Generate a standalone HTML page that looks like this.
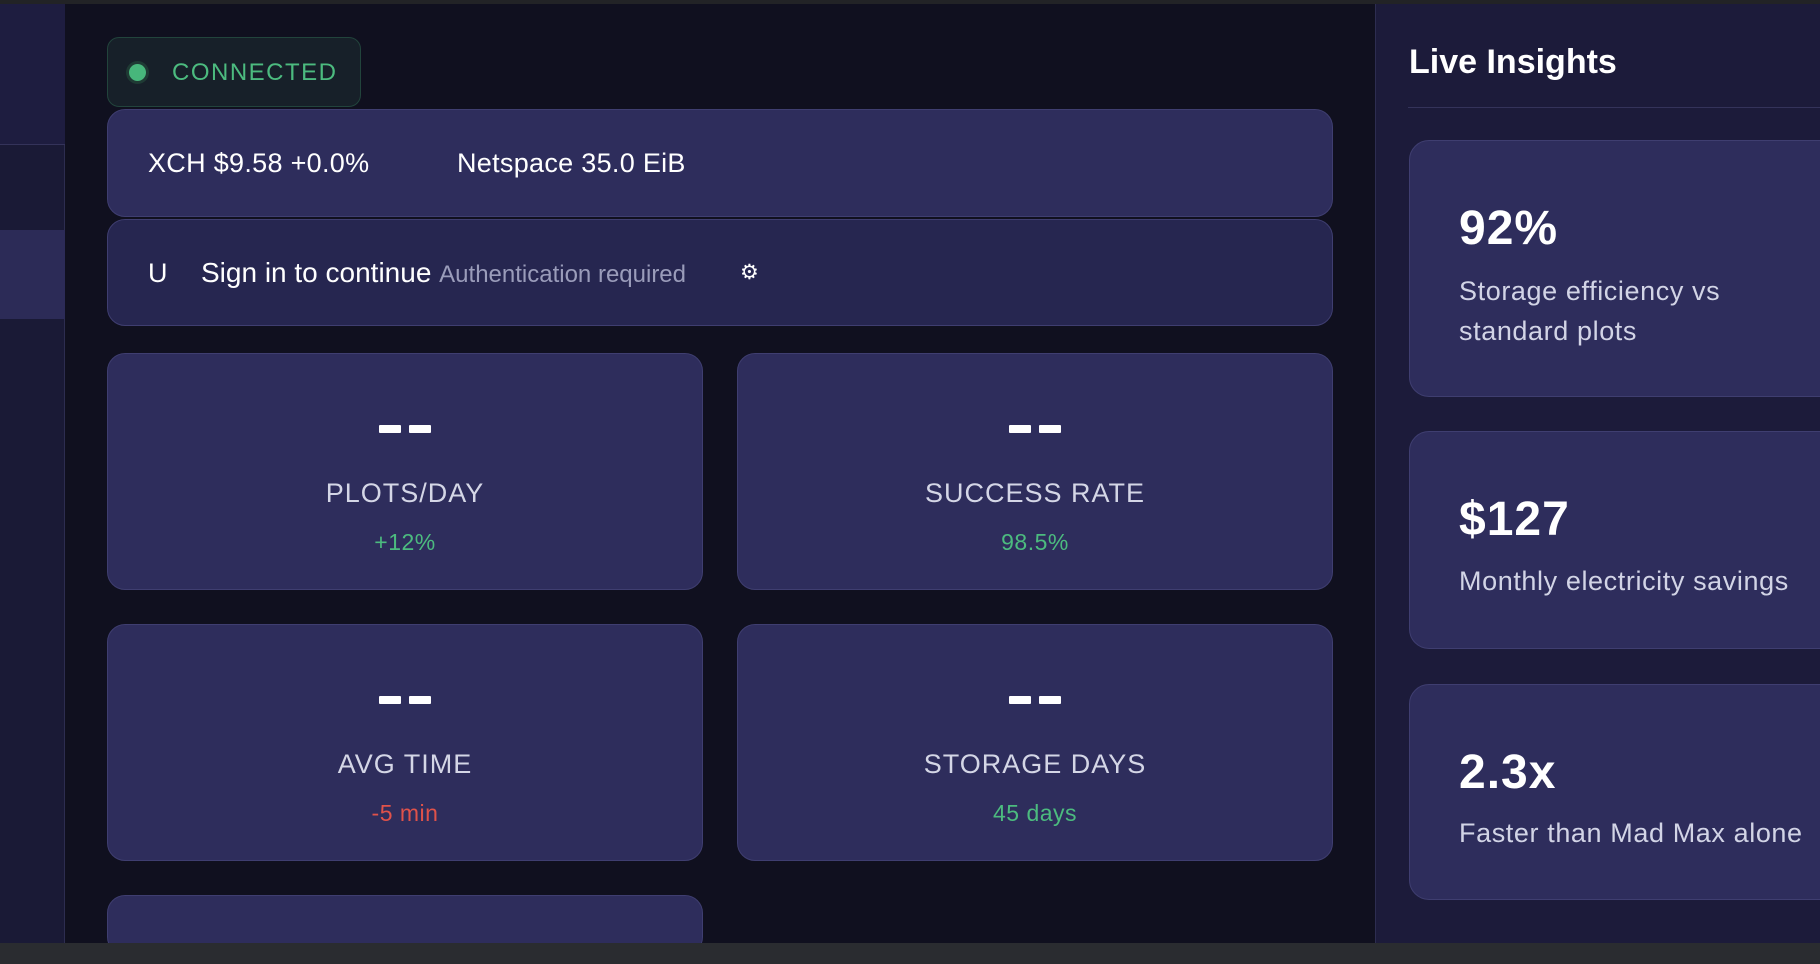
<!DOCTYPE html>
<html><head><style>
*{box-sizing:border-box;margin:0;padding:0}
html,body{width:1820px;height:964px;overflow:hidden}
body{background:#10101f;font-family:"Liberation Sans",sans-serif;position:relative;color:#fff}
.abs{position:absolute}
.card{position:absolute;background:#2e2d5c;border:1px solid #3f3e70;border-radius:18px}
.stat{text-align:center}
.dash{position:absolute;left:50%;top:71px;width:52px;margin-left:-26px;height:8px}
.dash:before,.dash:after{content:"";position:absolute;top:0;width:22px;height:8px;background:#fff;border-radius:1px}
.dash:before{left:0}.dash:after{right:0}
.lbl{position:absolute;left:0;right:0;top:124px;font-size:27px;color:#d4d6e6;letter-spacing:1px}
.sub{position:absolute;left:0;right:0;top:175px;font-size:23px;color:#4cbb7f;letter-spacing:.5px}
.ins{position:absolute;left:1409px;width:460px;background:#2e2d5c;border:1px solid #3f3e70;border-radius:20px}
.ins b{position:absolute;left:49px;font-size:48px;font-weight:bold;letter-spacing:1px}
.ins span{position:absolute;left:49px;font-size:27px;color:#d2d4e6;line-height:40px;letter-spacing:.6px}
</style></head><body>
<div class="abs" style="left:0;top:0;width:1820px;height:4px;background:#222326"></div>
<div class="abs" style="left:0;top:4px;width:65px;height:940px;background:#1a1a36;border-right:1px solid #2d2d50"></div>
<div class="abs" style="left:0;top:4px;width:65px;height:141px;background:#1e1d40;border-bottom:1px solid #34335a"></div>
<div class="abs" style="left:0;top:230px;width:65px;height:89px;background:#2c2b57"></div>
<div class="abs" style="left:1375px;top:4px;width:445px;height:940px;background:#1c1b3a;border-left:1px solid #2d2d50"></div>

<div class="abs" style="left:107px;top:37px;width:254px;height:70px;background:#172029;border:1px solid #22443c;border-radius:12px">
<div class="abs" style="left:21px;top:26px;width:17px;height:17px;border-radius:50%;background:#47b67b;box-shadow:0 0 0 3px #1f3a34"></div>
<div class="abs" style="left:64px;top:21px;font-size:24px;color:#4cbb7f;letter-spacing:1.5px">CONNECTED</div></div>

<div class="card" style="left:107px;top:109px;width:1226px;height:108px;background:#2e2d5c">
<div class="abs" style="left:40px;top:38px;font-size:27px;letter-spacing:.3px">XCH $9.58 +0.0%</div>
<div class="abs" style="left:349px;top:38px;font-size:27px;letter-spacing:.3px">Netspace 35.0 EiB</div></div>
<div class="card" style="left:107px;top:219px;width:1226px;height:107px;background:#262650">
<div class="abs" style="left:40px;top:38px;font-size:27px">U</div>
<div class="abs" style="left:93px;top:37px;font-size:28px">Sign in to continue <span style="font-size:24px;color:#9a9cba">Authentication required</span></div>
<div class="abs" style="left:632px;top:40px;font-size:21px">⚙</div></div>

<div class="card stat" style="left:107px;top:353px;width:596px;height:237px"><div class="dash"></div><div class="lbl">PLOTS/DAY</div><div class="sub">+12%</div></div>
<div class="card stat" style="left:737px;top:353px;width:596px;height:237px"><div class="dash"></div><div class="lbl">SUCCESS RATE</div><div class="sub">98.5%</div></div>
<div class="card stat" style="left:107px;top:624px;width:596px;height:237px"><div class="dash"></div><div class="lbl">AVG TIME</div><div class="sub" style="color:#e0524a">-5 min</div></div>
<div class="card stat" style="left:737px;top:624px;width:596px;height:237px"><div class="dash"></div><div class="lbl">STORAGE DAYS</div><div class="sub">45 days</div></div>
<div class="card" style="left:107px;top:895px;width:596px;height:60px"></div>

<div class="abs" style="left:1409px;top:43px;font-size:34px;font-weight:bold">Live Insights</div>
<div class="abs" style="left:1408px;top:107px;width:412px;height:1px;background:#34335a"></div>
<div class="ins" style="top:140px;height:257px"><b style="top:60px">92%</b><span style="top:130px">Storage efficiency vs<br>standard plots</span></div>
<div class="ins" style="top:431px;height:218px"><b style="top:60px">$127</b><span style="top:129px">Monthly electricity savings</span></div>
<div class="ins" style="top:684px;height:216px"><b style="top:60px">2.3x</b><span style="top:128px">Faster than Mad Max alone</span></div>
<div class="abs" style="left:0;top:943px;width:1820px;height:21px;background:#2a2c30"></div>
</body></html>
